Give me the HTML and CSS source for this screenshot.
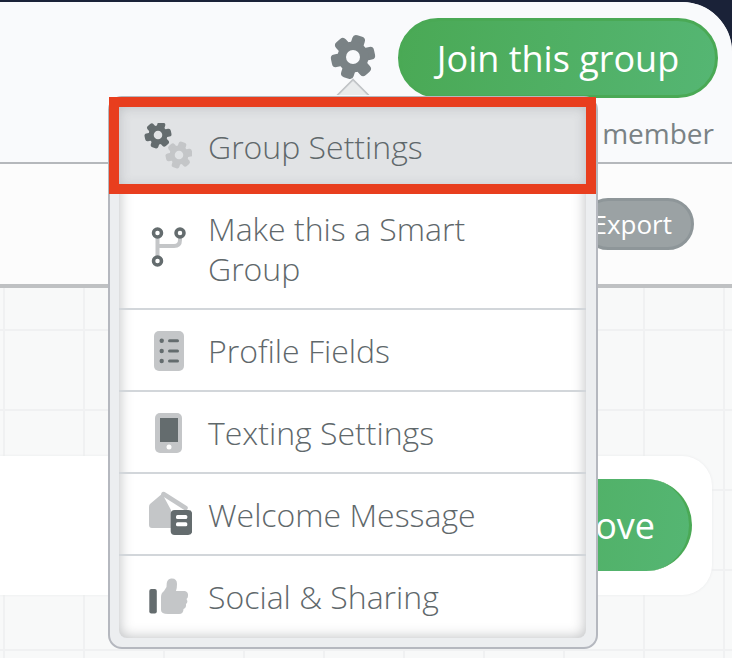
FILE: index.html
```html
<!DOCTYPE html>
<html lang="en">
<head>
<meta charset="utf-8">
<title>Group Settings menu</title>
<link rel="stylesheet" href="styles.css">
</head>
<body>
<svg class="defs" width="0" height="0" aria-hidden="true">
  <defs>
    <g id="gear-shape" transform="rotate(18)">
      <rect x="-6.5" y="-22" width="13" height="44" rx="4"/>
      <rect x="-6.5" y="-22" width="13" height="44" rx="4" transform="rotate(60)"/>
      <rect x="-6.5" y="-22" width="13" height="44" rx="4" transform="rotate(120)"/>
      <circle r="15.5"/>
    </g>
  </defs>
</svg>
<main class="panel">
  <header class="head">
    <div class="head-actions">
      <svg class="gear" viewBox="-24 -24 48 48"><use href="#gear-shape"/><circle class="gear-hole" r="7"/></svg>
      <button class="btn btn-join">Join this group</button>
    </div>
    <div class="member-line">member</div>
  </header>
  <section class="toolbar">
    <button class="btn btn-export">Export</button>
  </section>
  <section class="canvas">
    <div class="card">
      <button class="btn btn-remove">Remove</button>
    </div>
  </section>
</main>

<nav class="menu">
  <span class="caret"></span>
  <div class="menu-inner">
    <a class="item item-active">
      <svg class="ico" viewBox="0 0 48 48">
        <g transform="translate(14 12) scale(.61)" class="dark"><use href="#gear-shape"/><circle class="hole-active" r="7"/></g>
        <g transform="translate(35 32) scale(.61)" class="light"><use href="#gear-shape"/><circle class="hole-active" r="7"/></g>
      </svg>
      <span>Group Settings</span>
    </a>
    <a class="item item-smart">
      <svg class="ico" viewBox="0 0 48 48">
        <path class="branch" d="M13.500 8V36M36 8V15Q36 21 30 21H13.500"/>
        <circle class="node" cx="13.500" cy="8" r="4"/><circle class="node" cx="36" cy="8" r="4"/><circle class="node" cx="13.500" cy="36" r="4"/>
      </svg>
      <span>Make this a Smart Group</span>
    </a>
    <a class="item">
      <svg class="ico" viewBox="0 0 48 48">
        <rect class="light" x="10" y="4" width="30" height="40" rx="5"/>
        <g class="dark">
          <circle cx="17.700" cy="13.700" r="2.200"/><circle cx="17.700" cy="24" r="2.200"/><circle cx="17.700" cy="34" r="2.200"/>
          <rect x="24" y="12.200" width="11" height="3" rx="1.500"/><rect x="24" y="22.500" width="11" height="3" rx="1.500"/><rect x="24" y="32.500" width="11" height="3" rx="1.500"/>
        </g>
      </svg>
      <span>Profile Fields</span>
    </a>
    <a class="item">
      <svg class="ico" viewBox="0 0 48 48">
        <rect class="light" x="11" y="4" width="27" height="40" rx="5"/>
        <rect class="dark" x="16" y="9" width="18" height="24"/>
        <circle class="white" cx="25" cy="38" r="2.500"/>
      </svg>
      <span>Texting Settings</span>
    </a>
    <a class="item">
      <svg class="ico" viewBox="0 0 48 48">
        <path class="light" d="M19 2 6 13Q5 14 5 16V34Q5 37 8 37H27V19L20.500 7Z"/>
        <path class="roof" d="M19.500 3 41.500 17"/>
        <rect class="dark" x="26.700" y="19" width="21.500" height="25" rx="4"/>
        <rect class="white" x="32" y="24" width="11.300" height="4" rx="1.500"/><rect class="white" x="32" y="31.300" width="11.300" height="4" rx="1.500"/>
      </svg>
      <span>Welcome Message</span>
    </a>
    <a class="item item-last">
      <svg class="ico" viewBox="0 0 48 48">
        <rect class="dark" x="5.300" y="16" width="7.500" height="24.500" rx="2"/>
        <path class="light" d="M17 24Q17 20 20 18L22.500 14Q22 6 27 5.500 33 5 33 11 33 15 32 18H41Q44.500 19 44 23 44 25 42.500 26 44.500 29 42 31 42.500 35 39.500 36 39.500 41 35 41H24Q17 41 17 37Z"/>
      </svg>
      <span>Social &amp; Sharing</span>
    </a>
  </div>
  <span class="highlight"></span>
</nav>
</body>
</html>
```

FILE: styles.css
```css
* { box-sizing: border-box; }
html, body { margin: 0; height: 100%; }
body {
  background: #1a2238;
  padding-top: 2px;
  font-family: "Open Sans", sans-serif;
  overflow: hidden;
  position: relative;
}
.defs { position: absolute; }
.panel {
  height: 656px;
  background: #f8f9f9;
  border-top-right-radius: 50px;
  overflow: hidden;
  display: flex;
  flex-direction: column;
}
.head {
  height: 162px;
  flex: none;
  background: #f9fafc;
  border-bottom: 2px solid #b5b8bc;
  padding: 16px 14px 0 0;
  display: flex;
  flex-direction: column;
  align-items: flex-end;
}
.head-actions { display: flex; align-items: center; gap: 21px; }
.gear { width: 48px; height: 48px; fill: #7a8285; margin-top: -3px; }
.gear-hole { fill: #f9fafc; }
.btn {
  font-family: inherit;
  color: #fff;
  border-style: solid;
  padding: 0;
  display: block;
}
.btn-join {
  width: 320px;
  height: 80px;
  border-width: 3px;
  border-color: #4aa955;
  border-radius: 40px;
  background: linear-gradient(100deg, #4aa955, #55b673);
  font-size: 36px;
}
.member-line {
  margin: 17px 4px 0 0;
  font-size: 28px;
  line-height: 36px;
  color: #7a8285;
}
.toolbar {
  height: 124px;
  flex: none;
  background: #fcfcfc;
  border-bottom: 4px solid #bfc1c3;
  padding: 34px 38px 0 0;
  display: flex;
  justify-content: flex-end;
  align-items: flex-start;
}
.btn-export {
  width: 112px;
  height: 52px;
  border-width: 3px;
  border-color: #8e9699;
  border-radius: 26px;
  background: #9ba2a4;
  font-size: 26px;
  text-align: right;
  padding-right: 19px;
}
.canvas {
  flex: 1;
  padding: 168px 20px 0 0;
  background-color: #f8f9f9;
  background-image:
    repeating-linear-gradient(90deg, #f0f1f2 0 2px, transparent 2px 80px),
    repeating-linear-gradient(0deg, #f0f1f2 0 2px, transparent 2px 80px);
  background-position: 3px 0, 0 -7px;
}
.card {
  height: 139px;
  background: #fff;
  border-radius: 0 30px 30px 0;
  box-shadow: 0 0 3px #e9eaeb;
  padding: 23px 20px 0 0;
  display: flex;
  justify-content: flex-end;
}
.btn-remove {
  width: 300px;
  height: 92px;
  border-width: 0 3px 0 0;
  border-color: #4aa955;
  border-radius: 46px;
  background: linear-gradient(100deg, #4aa955, #55b673);
  font-size: 36px;
  text-align: right;
  padding-right: 34px;
}
.menu {
  position: absolute;
  left: 108px;
  top: 96px;
  width: 490px;
  height: 553px;
  background: #eceef0;
  border: 2px solid #b5b8bf;
  border-radius: 14px;
  padding: 9px 10px 9px 9px;
}
.caret {
  position: absolute;
  left: 231px;
  top: -15px;
  width: 24px;
  height: 24px;
  background: #e9ebec;
  border-left: 2px solid #c3c6c9;
  border-top: 2px solid #c3c6c9;
  transform: rotate(45deg);
  clip-path: polygon(0 0, 100% 0, 0 100%);
}
.menu-inner {
  height: 100%;
  background: #fff;
  border-radius: 0 0 8px 8px;
  box-shadow: inset 0 0 14px rgba(80, 85, 90, .4);
  display: flex;
  flex-direction: column;
}
.item {
  display: flex;
  align-items: center;
  gap: 16px;
  padding: 2px 25px 0;
  min-height: 82px;
  border-bottom: 2px solid #d2d6da;
  color: #5f686b;
  font-size: 32px;
  font-weight: 300;
  line-height: 40px;
}
.item-last { border-bottom: 0; padding-top: 0; }
.item-active {
  height: 80px;
  min-height: 80px;
  flex: none;
  padding-top: 0;
  border-bottom: 0;
  background: #e1e3e5;
  box-shadow: inset 0 0 12px rgba(80, 85, 90, .25);
}
.item-smart { min-height: 123px; padding-right: 90px; }
.ico { width: 48px; height: 48px; flex: none; }
.dark { fill: #646c6e; }
.light { fill: #c4c6c8; }
.white { fill: #fff; }
.hole-active { fill: #e1e3e5; }
.branch { fill: none; stroke: #c4c6c8; stroke-width: 4; }
.roof { fill: none; stroke: #c4c6c8; stroke-width: 4.500; stroke-linecap: round; }
.node { fill: #fff; stroke: #646c6e; stroke-width: 3.500; }
.highlight {
  position: absolute;
  left: -1px;
  top: -1px;
  width: 487px;
  height: 97px;
  border: 10px solid #e83e1e;
  pointer-events: none;
}
```
